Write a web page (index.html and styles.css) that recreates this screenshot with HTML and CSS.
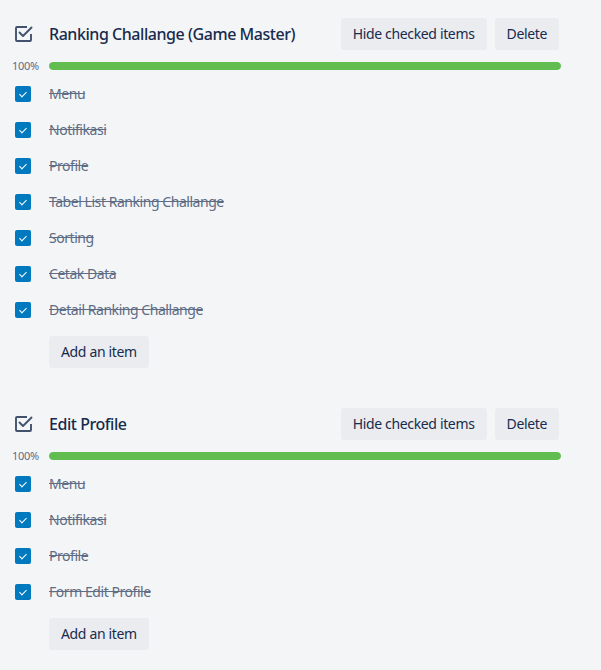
FILE: index.html
```html
<!DOCTYPE html>
<html>
<head>
<meta charset="utf-8">
<link rel="stylesheet" href="styles.css">
</head>
<body>
<div class="page">
  <section class="checklist">
    <div class="cl-header">
      <div class="cl-icon">
        <svg width="18" height="18" viewBox="0 0 18 18"><path d="M16 9v6a1 1 0 0 1-1 1H2a1 1 0 0 1-1-1V3a1 1 0 0 1 1-1h10" fill="none" stroke="#42526e" stroke-width="1.9"/><path d="M4.5 7.5l3.5 3.5 8.5-8.5" fill="none" stroke="#42526e" stroke-width="1.9" stroke-linecap="round" stroke-linejoin="round"/></svg>
      </div>
      <h3 class="cl-title">Ranking Challange (Game Master)</h3>
      <div class="cl-actions">
        <button class="btn">Hide checked items</button>
        <button class="btn">Delete</button>
      </div>
    </div>
    <div class="cl-progress">
      <span class="pct">100%</span>
      <div class="bar"><div class="fill" style="width:100%"></div></div>
    </div>
    <ul class="items">
      <li class="item"><span class="cb"></span><span class="txt">Menu</span></li>
      <li class="item"><span class="cb"></span><span class="txt">Notifikasi</span></li>
      <li class="item"><span class="cb"></span><span class="txt">Profile</span></li>
      <li class="item"><span class="cb"></span><span class="txt">Tabel List Ranking Challange</span></li>
      <li class="item"><span class="cb"></span><span class="txt">Sorting</span></li>
      <li class="item"><span class="cb"></span><span class="txt">Cetak Data</span></li>
      <li class="item"><span class="cb"></span><span class="txt">Detail Ranking Challange</span></li>
    </ul>
    <div class="add-row"><button class="btn">Add an item</button></div>
  </section>

  <section class="checklist">
    <div class="cl-header">
      <div class="cl-icon">
        <svg width="18" height="18" viewBox="0 0 18 18"><path d="M16 9v6a1 1 0 0 1-1 1H2a1 1 0 0 1-1-1V3a1 1 0 0 1 1-1h10" fill="none" stroke="#42526e" stroke-width="1.9"/><path d="M4.5 7.5l3.5 3.5 8.5-8.5" fill="none" stroke="#42526e" stroke-width="1.9" stroke-linecap="round" stroke-linejoin="round"/></svg>
      </div>
      <h3 class="cl-title">Edit Profile</h3>
      <div class="cl-actions">
        <button class="btn">Hide checked items</button>
        <button class="btn">Delete</button>
      </div>
    </div>
    <div class="cl-progress">
      <span class="pct">100%</span>
      <div class="bar"><div class="fill" style="width:100%"></div></div>
    </div>
    <ul class="items">
      <li class="item"><span class="cb"></span><span class="txt">Menu</span></li>
      <li class="item"><span class="cb"></span><span class="txt">Notifikasi</span></li>
      <li class="item"><span class="cb"></span><span class="txt">Profile</span></li>
      <li class="item"><span class="cb"></span><span class="txt">Form Edit Profile</span></li>
    </ul>
    <div class="add-row"><button class="btn">Add an item</button></div>
  </section>
</div>
</body>
</html>
```
FILE: styles.css
```css
* { box-sizing: border-box; }
html, body { margin: 0; padding: 0; background: #f4f5f7; }
body {
  font-family: "Noto Sans", "Open Sans", sans-serif;
  color: #172b4d;
  width: 601px;
  height: 670px;
  overflow: hidden;
}
.page {
  padding: 18px 42px 0 0;
  display: flex;
  flex-direction: column;
  gap: 40px;
}
.checklist { display: flex; flex-direction: column; }
.cl-header {
  display: flex;
  align-items: center;
  height: 32px;
}
.cl-icon {
  width: 49px;
  padding-left: 15px;
  display: flex;
  align-items: center;
  height: 32px;
}
.cl-title {
  margin: 0;
  font-size: 16px;
  font-weight: 500;
  line-height: 20px;
  letter-spacing: -0.45px;
  flex: 1;
  color: #172b4d;
}
.cl-actions { display: flex; gap: 8px; }
.btn {
  font-family: inherit;
  font-size: 14px;
  letter-spacing: -0.35px;
  color: #172b4d;
  background: #ebecf0;
  border: none;
  border-radius: 3px;
  height: 32px;
  padding: 0 12px;
  line-height: 20px;
  cursor: pointer;
}
.cl-progress {
  display: flex;
  align-items: center;
  height: 16px;
  margin: 8px -2px 0 0;
}
.pct {
  width: 49px;
  padding-left: 12px;
  font-size: 11px;
  letter-spacing: -0.3px;
  color: #5e6c84;
  line-height: 16px;
}
.bar {
  flex: 1;
  height: 8px;
  background: #dfe1e6;
  border-radius: 4px;
  overflow: hidden;
}
.fill { height: 100%; background: #61bd4f; border-radius: 4px; }
.items { list-style: none; margin: 2px 0 0; padding: 0; }
.item {
  display: flex;
  align-items: center;
  height: 36px;
}
.cb {
  width: 16px;
  height: 16px;
  margin-left: 15px;
  margin-right: 18px;
  background: #0079bf;
  border-radius: 2px;
  position: relative;
}
.cb::after {
  content: "";
  position: absolute;
  left: 6px;
  top: 4px;
  width: 3px;
  height: 6px;
  border-right: 1.5px solid #fff;
  border-bottom: 1.5px solid #fff;
  transform: rotate(45deg);
}
.txt {
  font-size: 14px;
  letter-spacing: -0.45px;
  color: #5e6c84;
  text-decoration: line-through;
  line-height: 20px;
}
.add-row { padding-left: 49px; margin-top: 8px; }
```
